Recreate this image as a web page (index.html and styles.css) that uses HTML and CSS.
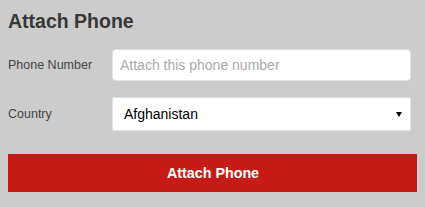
FILE: index.html
```html
<!DOCTYPE html>
<html lang="en">
<head>
    <meta charset="UTF-8">
    <meta name="viewport" content="width=device-width, initial-scale=1.0">
    <title>Attach Phone</title>
    <link rel="stylesheet" href="styles.css">
</head>
<body>
    <h1 class="title">Attach Phone</h1>
    <form class="attach-form">
        <div class="row">
            <label class="label" for="phone">Phone Number</label>
            <input class="field" id="phone" type="text" placeholder="Attach this phone number">
        </div>
        <div class="row row-country">
            <label class="label" for="country">Country</label>
            <div class="select-wrap">
                <select class="field select" id="country">
                    <option>Afghanistan</option>
                    <option>Albania</option>
                    <option>Algeria</option>
                </select>
            </div>
        </div>
        <button class="submit" type="button">Attach Phone</button>
    </form>
</body>
</html>
```

FILE: styles.css
```css
body {
    margin: 8px;
    background: #cccccc;
    font-family: "Liberation Sans", Arial, sans-serif;
}
.title {
    margin: 2px 0 0;
    font-size: 19.5px;
    line-height: 22px;
    font-weight: bold;
    color: #383838;
}
.attach-form {
    margin-top: 17px;
}
.row {
    display: flex;
    align-items: center;
    height: 32px;
}
.row-country {
    margin-top: 16px;
    height: 34px;
}
.label {
    width: 104px;
    font-size: 12.5px;
    color: #444;
}
.field {
    box-sizing: border-box;
    width: 299px;
    height: 32px;
    padding: 0 7px;
    border: 1px solid #e2e2e2;
    border-radius: 4px;
    background: #fff;
    font-family: "Liberation Sans", Arial, sans-serif;
    font-size: 14px;
    color: #000;
    outline: none;
}
.field::placeholder {
    color: #aaa;
}
.select-wrap {
    position: relative;
}
.select {
    display: block;
    height: 34px;
    padding-left: 11px;
    border-radius: 2px;
    -webkit-appearance: none;
    appearance: none;
}
.select-wrap::after {
    content: "";
    position: absolute;
    right: 9px;
    top: 15px;
    border-left: 3px solid transparent;
    border-right: 3px solid transparent;
    border-top: 5px solid #000;
    pointer-events: none;
}
.submit {
    display: block;
    width: 410px;
    height: 38px;
    margin-top: 23px;
    border: none;
    background: #c71b17;
    color: #fff;
    font-family: "Liberation Sans", Arial, sans-serif;
    font-size: 14.3px;
    font-weight: bold;
    cursor: pointer;
}
```
